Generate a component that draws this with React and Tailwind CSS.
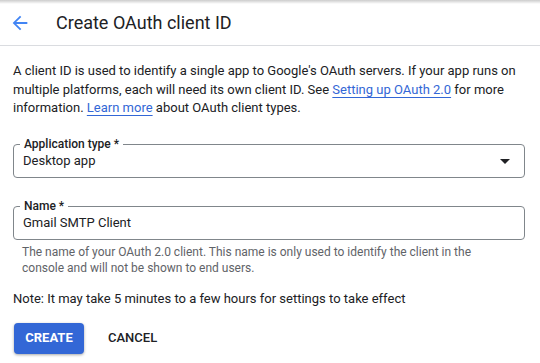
const App = () => {
  return (
    <div className="relative h-[363px] w-[540px] overflow-hidden bg-white font-['Roboto',sans-serif] text-[#202124]">
      <div className="pointer-events-none absolute inset-x-0 top-0 h-[4px] bg-gradient-to-b from-black/20 to-transparent" />

      <header className="flex h-[46px] items-center border-b border-[#dadce0]">
        <button className="ml-[9px] flex h-[22px] w-[22px] items-center justify-center text-[#4285f4]">
          <svg width="22" height="22" viewBox="0 0 24 24" fill="currentColor">
            <path d="M20 11H7.83l5.59-5.59L12 4l-8 8 8 8 1.41-1.41L7.83 13H20v-2z" />
          </svg>
        </button>
        <h1 className="ml-[25px] text-[18px] font-normal leading-none">Create OAuth client ID</h1>
      </header>

      <div className="px-[13px] pt-[16px]">
        <p className="text-[13px] leading-[18.5px]">
          A client ID is used to identify a single app to Google&apos;s OAuth servers. If your app runs on multiple
          platforms, each will need its own client ID. See{' '}
          <a href="#" className="text-[#3367d6] underline underline-offset-[3px]">
            Setting up OAuth 2.0
          </a>{' '}
          for more information.{' '}
          <a href="#" className="text-[#3367d6] underline underline-offset-[3px]">
            Learn more
          </a>{' '}
          about OAuth client types.
        </p>

        <div className="relative mt-[26px] h-[34px] w-[512px] rounded-[4px] border border-[#80868b]">
          <span className="absolute -top-[9px] left-[6px] bg-white px-[4px] text-[12px] font-medium leading-[16px]">
            Application type *
          </span>
          <div className="flex h-full items-center justify-between pl-[9px] pr-[14px] pt-[1px] text-[13px]">
            <span>Desktop app</span>
            <svg width="10" height="5" viewBox="0 0 10 5" fill="#202124">
              <path d="M0 0l5 5 5-5z" />
            </svg>
          </div>
        </div>

        <div className="relative mt-[28px] h-[34px] w-[512px] rounded-[4px] border border-[#80868b]">
          <span className="absolute -top-[9px] left-[6px] bg-white px-[4px] text-[12px] font-medium leading-[16px]">
            Name *
          </span>
          <div className="flex h-full items-center pl-[9px] pt-[1px] text-[13px]">Gmail SMTP Client</div>
        </div>

        <p className="mt-[4px] pl-[9px] pr-[30px] text-[12px] leading-[16px] text-[#5f6368]">
          The name of your OAuth 2.0 client. This name is only used to identify the client in the console and will not
          be shown to end users.
        </p>

        <p className="mt-[13px] text-[13px] leading-[19px]">Note: It may take 5 minutes to a few hours for settings to take effect</p>

        <div className="mt-[15px] flex items-center">
          <button className="ml-[1px] h-[31px] w-[70px] rounded-[4px] bg-[#3367d6] text-[13px] font-bold text-white shadow-[0_1px_3px_rgba(0,0,0,0.35)]">
            CREATE
          </button>
          <button className="ml-[16px] h-[31px] px-[8px] text-[13px] font-medium text-[#202124]">CANCEL</button>
        </div>
      </div>
    </div>
  );
};

export default App;
